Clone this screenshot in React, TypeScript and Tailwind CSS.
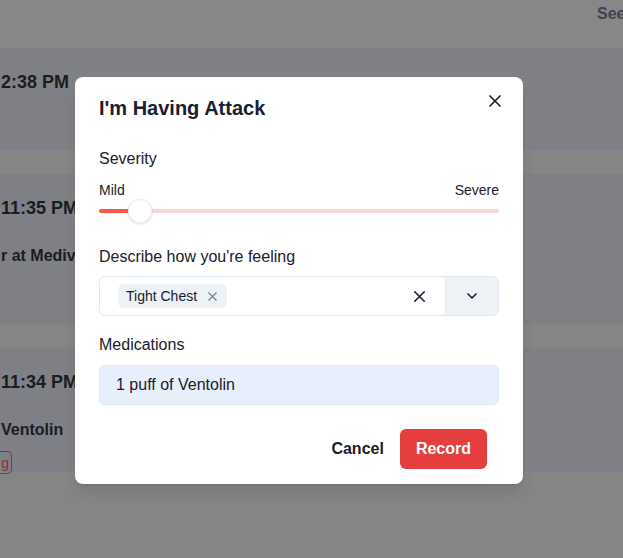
import { X, ChevronDown } from "lucide-react";

function Background() {
  return (
    <div className="h-[558px] w-[623px] overflow-hidden bg-[#858585] text-[#1a1c22]">
      <div className="flex h-12 items-start justify-end bg-[#878787] pt-[2px]">
        <span className="-mr-[40px] w-[66px] text-base font-bold text-[#3d4451]">See all</span>
      </div>
      <div className="h-[102px] bg-[#7f8085] pt-5">
        <p className="pl-[1px] text-lg font-bold">2:38 PM</p>
      </div>
      <div className="h-6" />
      <div className="h-[150px] bg-[#7f8085] pt-5">
        <p className="pl-[1px] text-lg font-bold">11:35 PM</p>
        <p className="mt-[22px] pl-[1px] text-base font-bold">r at Medivist Clinic</p>
      </div>
      <div className="h-6" />
      <div className="h-[124px] bg-[#7f8085] pt-5">
        <p className="pl-[1px] text-lg font-bold">11:34 PM</p>
        <p className="mt-[22px] pl-[1px] text-base font-bold">Ventolin</p>
        <div className="mt-[9px] -ml-[10px] inline-flex h-[23px] w-[22px] items-center justify-end rounded-[4px] border border-[#9b2c2c] pr-[2px] text-sm text-[#9b2c2c]">
          g
        </div>
      </div>
    </div>
  );
}

function Modal() {
  return (
    <div className="absolute left-[75px] top-[77px] w-[448px] rounded-lg bg-white text-[#1a202c] shadow-lg">
      <div className="px-6 pb-4 pt-[17px] text-xl font-bold leading-7">I'm Having Attack</div>
      <button className="absolute right-3 top-2 flex h-8 w-8 items-center justify-center">
        <X size={20} strokeWidth={2} className="text-[#1a202c]" />
      </button>
      <div className="px-6 pb-2 pt-[9px]">
        <p className="text-base leading-6">Severity</p>
        <div className="mt-[9px] flex justify-between text-sm leading-5">
          <span>Mild</span>
          <span>Severe</span>
        </div>
        <div className="relative -mt-px flex h-6 items-center">
          <div className="h-1 w-full rounded-full bg-[#fdd5d2]">
            <div className="h-1 w-[41px] rounded-l-full bg-[#f85a46]" />
          </div>
          <div className="absolute left-[29px] top-0 h-6 w-6 rounded-full border border-[#edf0f3] bg-white shadow-[0_1px_3px_rgba(0,0,0,0.15)]" />
        </div>

        <p className="mt-[22px] text-base leading-6">Describe how you're feeling</p>
        <div className="mt-[7px] flex h-10 items-stretch rounded-md border border-[#e2e8f0]">
          <div className="flex flex-1 items-center pl-[18px]">
            <span className="flex h-6 items-center gap-2 rounded-md bg-[#edf2f7] pl-2 pr-[7px] text-sm">
              Tight Chest
              <X size={15} strokeWidth={1.75} className="text-[#718096]" />
            </span>
          </div>
          <div className="flex w-[52px] items-center justify-center">
            <X size={19} strokeWidth={2} className="text-[#1a202c]" />
          </div>
          <div className="flex w-[53px] items-center justify-center rounded-r-md border-l border-[#e2e8f0] bg-[#edf2f7]">
            <ChevronDown size={16} strokeWidth={2.5} className="text-[#1a202c]" />
          </div>
        </div>

        <p className="mt-[17px] text-base leading-6">Medications</p>
        <div className="mt-2 flex h-10 items-center rounded-md border border-[#e2e8f0] bg-[#e7effc] pl-4 text-base">
          1 puff of Ventolin
        </div>
      </div>
      <div className="flex items-center justify-end pb-[15px] pt-4 pr-[36px]">
        <button className="h-10 px-4 text-base font-bold text-[#1a202c]">Cancel</button>
        <button className="h-10 rounded-md bg-[#e53e3e] px-4 text-base font-bold text-white">Record</button>
      </div>
    </div>
  );
}

export default function App() {
  return (
    <div className="relative h-[558px] w-[623px] overflow-hidden font-['Liberation_Sans',Arial,sans-serif]">
      <Background />
      <Modal />
    </div>
  );
}
